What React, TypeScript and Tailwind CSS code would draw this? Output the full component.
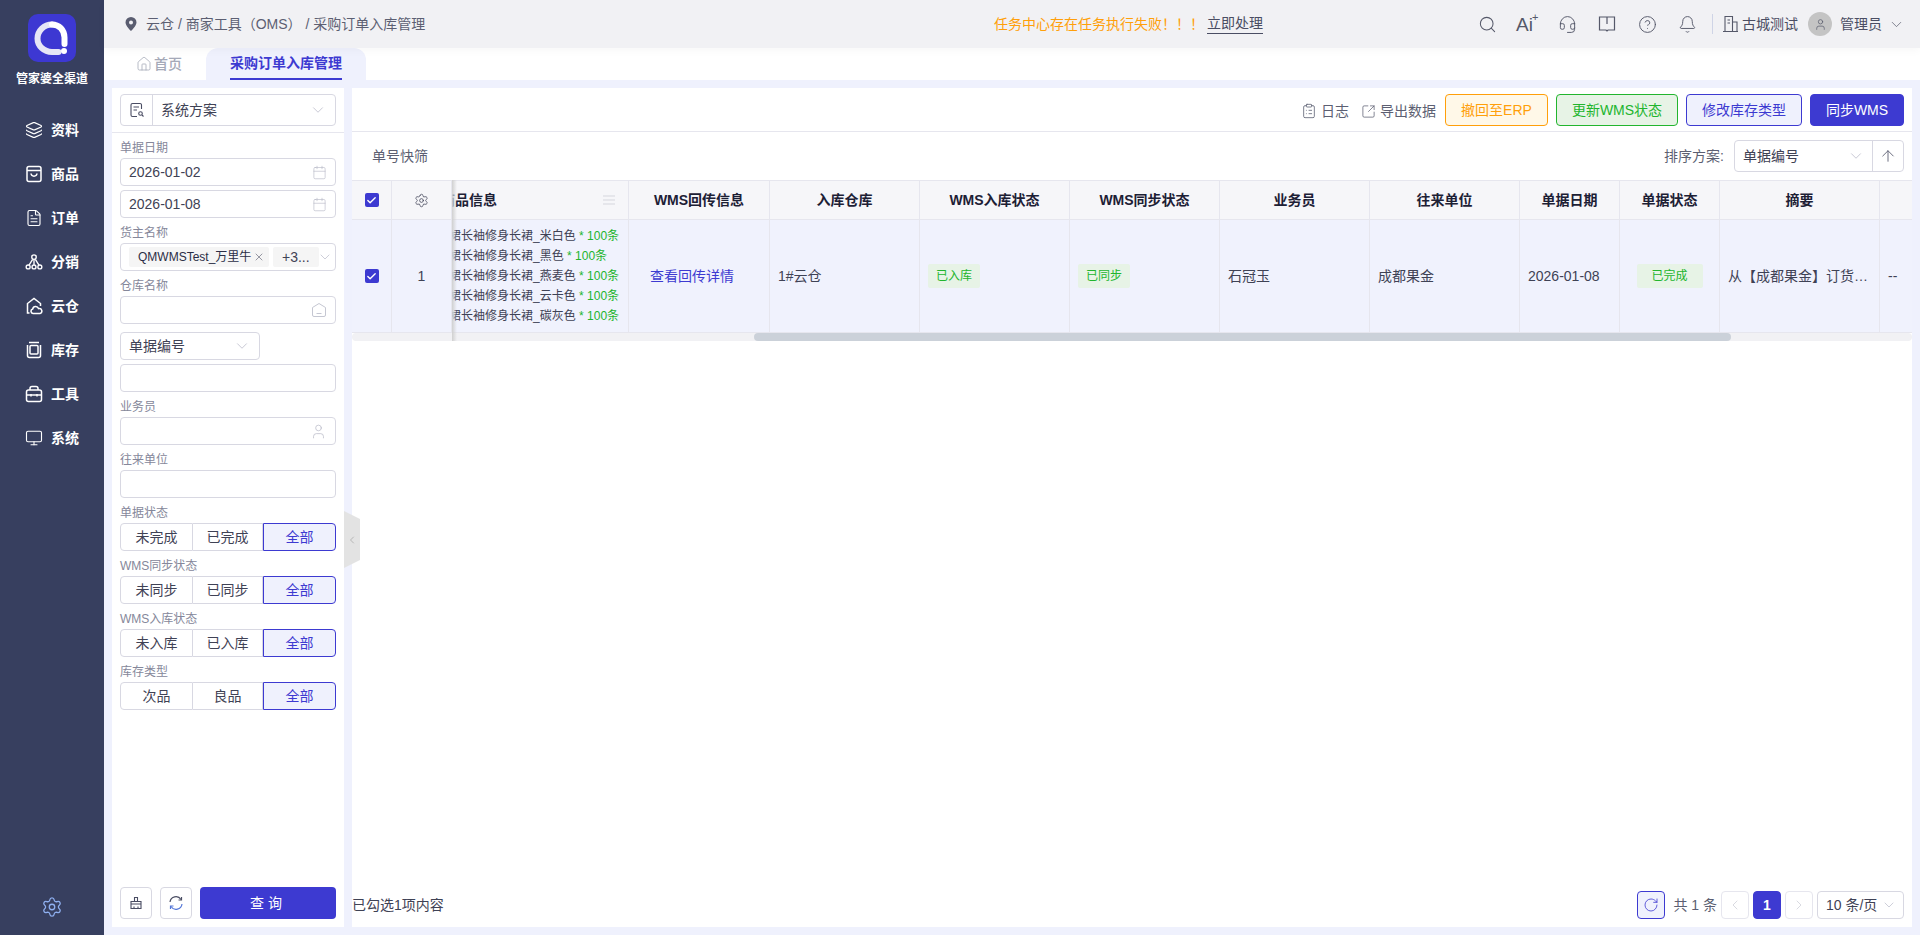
import React from "react";
import {
  Layers, FileText, Monitor, Settings, Search, Bell, CircleHelp, ChevronDown, ChevronLeft, ChevronRight,
  House, Calendar, User, ArrowUp, RotateCw, ClipboardList, SquareArrowOutUpRight, Headset, Check, X,
} from "lucide-react";

const ShopIcon = () => (
  <svg width="18" height="18" viewBox="0 0 18 18" fill="none" stroke="currentColor" strokeWidth="1.5">
    <rect x="2" y="1.5" width="14" height="15" rx="2" />
    <path d="M2 5.5h14M6 8.5c.5 3.5 5.500 3.500 6 0" />
  </svg>
);
const NetIcon = () => (
  <svg width="20" height="18" viewBox="0 0 20 18" fill="none" stroke="currentColor" strokeWidth="1.5">
    <circle cx="10" cy="3.500" r="2.500" /><circle cx="3.500" cy="14.500" r="2.200" /><circle cx="10" cy="14.500" r="2.200" /><circle cx="16.500" cy="14.500" r="2.200" />
    <path d="M10 6v6M8.500 6 4.500 12.500M11.500 6l4 6.500" />
  </svg>
);
const CloudHouseIcon = () => (
  <svg width="18" height="18" viewBox="0 0 18 18" fill="none" stroke="currentColor" strokeWidth="1.5">
    <path d="M4.500 16H2.500V6.500L9 1.500l6.500 5V9" />
    <path d="M8 16.500a2.300 2.300 0 0 1-.3-4.500 3 3 0 0 1 5.800-.4 2.500 2.500 0 0 1 1.500 4.900z" />
  </svg>
);
const StockIcon = () => (
  <svg width="18" height="18" viewBox="0 0 18 18" fill="none" stroke="currentColor" strokeWidth="1.5">
    <path d="M4 1.500h10M2.500 4v10.500a2 2 0 0 0 2 2h9a2 2 0 0 0 2-2V4" />
    <rect x="5" y="4.500" width="8" height="8.500" rx="1" />
  </svg>
);
const ToolIcon = () => (
  <svg width="18" height="18" viewBox="0 0 18 18" fill="none" stroke="currentColor" strokeWidth="1.5">
    <path d="M5 5V3.500a2 2 0 0 1 2-2h4a2 2 0 0 1 2 2V5" />
    <rect x="1.500" y="5" width="15" height="11.500" rx="2" />
    <path d="M1.500 10h15M6 9v2.500M12 9v2.500" />
  </svg>
);
const LogoIcon = () => (
  <div className="w-12 h-12 rounded-[10px] bg-[#3d38d2] flex items-center justify-center">
    <svg width="36" height="36" viewBox="0 0 36 36" fill="none">
      <path d="M18 4.500C10 4.500 3.500 11 3.500 18.500S10 32 18 32h6.500" stroke="#e6e6f6" strokeWidth="6" strokeLinecap="round" />
      <path d="M18 4.500c7 0 12.500 5.500 12.500 13V24" stroke="#ffffff" strokeWidth="6" strokeLinecap="round" />
      <circle cx="30" cy="31" r="3" fill="#ffffff" />
    </svg>
  </div>
);
const SchemeIcon = () => (
  <svg width="16" height="16" viewBox="0 0 16 16" fill="none" stroke="#4a4d63" strokeWidth="1.100">
    <path d="M8 14.500H3.500a1.500 1.500 0 0 1-1.500-1.500V3a1.500 1.500 0 0 1 1.500-1.500H11A1.500 1.500 0 0 1 12.500 3v4" />
    <path d="M4.500 5h5.500M4.500 8H8" /><circle cx="11.500" cy="11.500" r="1.800" /><path d="m13 13 1.500 1.500" />
  </svg>
);
const WarehouseIcon = () => (
  <svg width="16" height="16" viewBox="0 0 16 16" fill="none" stroke="#c5c7d2" strokeWidth="1">
    <path d="M1.500 5.500 8 1.500l6.500 4V13a1.500 1.500 0 0 1-1.500 1.500H3A1.500 1.500 0 0 1 1.500 13z" /><path d="M5.500 11.500h5" />
  </svg>
);
const BrushIcon = () => (
  <svg width="14" height="14" viewBox="0 0 14 14" fill="none" stroke="#4a4d63" strokeWidth="1.100">
    <path d="M5.500 5V1.500h3V5M2 5.500h10V8H2zM2 8v4.500h10V8M5 10.500v2M9 10.500v2" />
  </svg>
);
const CycleIcon = () => (
  <svg width="16" height="16" viewBox="0 0 16 16" fill="none" strokeWidth="1.200">
    <path d="M2 7a6 6 0 0 1 11-2.500" stroke="#4a4d63" /><path d="M14 9a6 6 0 0 1-11 2.500" stroke="#5577d8" />
    <path d="M13.500 2v3h-3" stroke="#4a4d63" /><path d="M2.500 14v-3h3" stroke="#5577d8" />
  </svg>
);
const BookIcon = () => (
  <svg width="18" height="18" viewBox="0 0 18 18" fill="none" stroke="#555869" strokeWidth="1.200">
    <path d="M1.500 2h15v13H10l-1 1-1-1H1.500zM9 2v7" />
  </svg>
);
const BuildingIcon = () => (
  <svg width="17" height="18" viewBox="0 0 17 18" fill="none" stroke="#555869" strokeWidth="1.100">
    <path d="M3 16.500V1.500h7.500v15M10.500 7H15v9.500M1 16.500h15M5.500 5h2.500M5.500 8h2.500" />
  </svg>
);
const PinIcon = () => (
  <svg width="12" height="14" viewBox="0 0 12 14">
    <path fillRule="evenodd" fill="#5a5d70" d="M6 0a5.500 5.500 0 0 1 5.500 5.500C11.500 9 6 14 6 14S.5 9 .5 5.500A5.500 5.500 0 0 1 6 0zm0 3.500a2 2 0 1 0 0 4 2 2 0 0 0 0-4z" />
  </svg>
);
const GridLines = () => (
  <svg width="12" height="10" viewBox="0 0 12 10" stroke="#d5d6dd" strokeWidth="1">
    <path d="M0 1h12M0 5h12M0 9h12" />
  </svg>
);

const Chevron = ({ size = 18 }: { size?: number }) => <ChevronDown size={size} strokeWidth={1} className="text-[#b5b7c5] shrink-0" />;

const Label = ({ children }: { children: React.ReactNode }) => (
  <div className="h-[25px] pt-[4px] flex items-center text-xs text-[#85879a]">{children}</div>
);

const Box = ({ children, className = "" }: { children?: React.ReactNode; className?: string }) => (
  <div className={`h-7 border border-[#d8d8e2] rounded-[4px] bg-white flex items-center px-2 text-sm text-[#3f4255] ${className}`}>{children}</div>
);

const Seg = ({ a, b }: { a: string; b: string }) => (
  <div className="h-7 grid grid-cols-[73px_70px_73px] text-sm text-[#3f4255]">
    <div className="border border-[#d8d8e2] rounded-l-[4px] flex items-center justify-center">{a}</div>
    <div className="border-y border-r border-[#d8d8e2] flex items-center justify-center">{b}</div>
    <div className="border border-[#3d3ad1] bg-[#eff1fd] text-[#3d3ad1] rounded-r-[4px] flex items-center justify-center">全部</div>
  </div>
);

const nav = [
  { icon: <Layers size={18} strokeWidth={1.5} />, label: "资料" },
  { icon: <ShopIcon />, label: "商品" },
  { icon: <FileText size={18} strokeWidth={1.5} />, label: "订单" },
  { icon: <NetIcon />, label: "分销" },
  { icon: <CloudHouseIcon />, label: "云仓" },
  { icon: <StockIcon />, label: "库存" },
  { icon: <ToolIcon />, label: "工具" },
  { icon: <Monitor size={18} strokeWidth={1.5} />, label: "系统" },
];

const Sidebar = () => (
  <aside className="w-[104px] shrink-0 bg-[#373f5f] flex flex-col items-center text-white">
    <div className="mt-[14px]"><LogoIcon /></div>
    <div className="mt-[9px] text-xs font-bold leading-[16px]">管家婆全渠道</div>
    <nav className="mt-[21px] flex flex-col w-full">
      {nav.map((n) => (
        <div key={n.label} className="h-11 flex items-center pl-[25px] gap-2 text-sm font-bold">
          <span className="w-[18px] flex justify-center">{n.icon}</span>
          {n.label}
        </div>
      ))}
    </nav>
    <div className="mt-auto mb-[17px] text-[#8fb0f0]"><Settings size={22} strokeWidth={1.4} /></div>
  </aside>
);

const TopBar = () => (
  <header className="relative z-10 h-12 shrink-0 bg-[#f1f1f4] shadow-[0_3px_8px_rgba(0,0,0,0.03)] flex items-center pl-[21px] pr-[15px] text-sm">
    <PinIcon />
    <span className="ml-[9px] text-[#5c5f72]">云仓 / 商家工具（OMS） / 采购订单入库管理</span>
    <div className="absolute left-[890px] flex items-center">
      <span className="text-[#ff9f0a]">任务中心存在任务执行失败！！！</span>
      <span className="ml-[3px] text-[#4a4d63] border-b border-[#4a4d63] leading-[19px]">立即处理</span>
    </div>
    <div className="ml-auto flex items-center text-[#4a4d63]">
      <Search size={19} strokeWidth={1.3} className="text-[#555869]" />
      <span className="ml-[19px] text-[#555869] text-[19px] leading-none w-[22px] relative">Ai<span className="absolute -top-[3px] left-[16px] text-[11px]">+</span></span>
      <Headset size={19} strokeWidth={1.2} className="ml-[20px] text-[#555869]" />
      <span className="ml-[21px]"><BookIcon /></span>
      <CircleHelp size={19} strokeWidth={1.2} className="ml-[22px] text-[#555869]" />
      <Bell size={19} strokeWidth={1.2} className="ml-[21px] text-[#555869]" />
      <span className="ml-[15px] w-px h-5 bg-[#cfd4e6]" />
      <span className="ml-[9px]"><BuildingIcon /></span>
      <span className="ml-[3px]">古城测试</span>
      <span className="ml-[10px] w-6 h-6 rounded-full bg-[#c4c4c4] flex items-center justify-center"><User size={13} strokeWidth={1.3} className="text-[#555869]" /></span>
      <span className="ml-2">管理员</span>
      <ChevronDown size={17} strokeWidth={1} className="ml-[6px] text-[#555869]" />
    </div>
  </header>
);

const Tabs = () => (
  <div className="h-8 shrink-0 bg-white flex items-stretch text-sm">
    <div className="w-[102px] pl-8 flex items-center gap-[2px] text-[#a5a9b8] font-medium">
      <House size={16} strokeWidth={1.2} />首页
    </div>
    <div className="w-40 bg-[#eff1fd] rounded-t-xl flex justify-center">
      <span className="h-full flex items-center border-b-2 border-[#3d3ad1] text-[#3d3ad1] font-bold">采购订单入库管理</span>
    </div>
  </div>
);

const FilterPanel = () => (
  <section className="w-[232px] shrink-0 bg-white flex flex-col">
    <div className="h-[45px] border-b border-[#e6e6ee] px-2 pt-[6px]">
      <div className="h-8 border border-[#d8d8e2] rounded-[4px] flex items-center text-sm text-[#3f4255]">
        <span className="w-8 h-full border-r border-[#d8d8e2] flex items-center justify-center shrink-0"><SchemeIcon /></span>
        <span className="ml-2 flex-1">系统方案</span>
        <span className="mr-2"><Chevron /></span>
      </div>
    </div>
    <div className="flex-1 flex flex-col px-2">
      <Label>单据日期</Label>
      <Box className="justify-between">2026-01-02<Calendar size={15} strokeWidth={1} className="text-[#b5b7c5]" /></Box>
      <Box className="justify-between mt-1">2026-01-08<Calendar size={15} strokeWidth={1} className="text-[#b5b7c5]" /></Box>
      <Label>货主名称</Label>
      <Box className="!pl-2 !pr-[8px] gap-1">
        <span className="h-5 w-[140px] shrink-0 bg-[#f5f5f5] rounded-[2px] flex items-center pl-[9px] text-xs text-[#2b2e45]">
          QMWMSTest_万里牛<X size={12} strokeWidth={1.2} className="ml-[2px] text-[#555869]" />
        </span>
        <span className="h-5 w-[46px] shrink-0 bg-[#f5f5f5] rounded-[2px] flex items-center pl-[9px] text-sm">+3...</span>
        <span className="-ml-[6px]"><Chevron size={16} /></span>
      </Box>
      <Label>仓库名称</Label>
      <Box className="justify-end"><WarehouseIcon /></Box>
      <Box className="mt-2 w-[140px] justify-between">单据编号<Chevron /></Box>
      <Box className="mt-1" />
      <Label>业务员</Label>
      <Box className="justify-end"><User size={17} strokeWidth={1} className="text-[#b5b7c5]" /></Box>
      <Label>往来单位</Label>
      <Box />
      <Label>单据状态</Label>
      <Seg a="未完成" b="已完成" />
      <Label>WMS同步状态</Label>
      <Seg a="未同步" b="已同步" />
      <Label>WMS入库状态</Label>
      <Seg a="未入库" b="已入库" />
      <Label>库存类型</Label>
      <Seg a="次品" b="良品" />
      <div className="mt-auto mb-2 flex gap-2">
        <button className="w-8 h-8 border border-[#d8d8e2] rounded-[4px] flex items-center justify-center"><BrushIcon /></button>
        <button className="w-8 h-8 border border-[#d8d8e2] rounded-[4px] flex items-center justify-center"><CycleIcon /></button>
        <button className="flex-1 h-8 rounded-[4px] bg-[#3d3ad1] text-white text-sm tracking-[4px]">查询</button>
      </div>
    </div>
  </section>
);

const Btn = ({ children, className }: { children: React.ReactNode; className: string }) => (
  <button className={`h-8 border rounded-[4px] text-sm flex items-center justify-center ${className}`}>{children}</button>
);

const Tag = ({ children, className = "" }: { children: React.ReactNode; className?: string }) => (
  <span className={`h-6 bg-[#e7f3e6] text-[#22b52e] text-xs rounded-[2px] inline-flex items-center justify-center ${className}`}>{children}</span>
);

const cols = "grid grid-cols-[40px_60px_177px_141px_150px_150px_150px_150px_150px_100px_100px_160px_32px]";
const headCell = "border-r border-[#e6e6ee] flex items-center justify-center";
const rowCell = "min-w-0 border-r border-[#e6e6ee] flex items-center text-sm text-[#3f4255]";

const CheckBox = () => (
  <span className="w-[14px] h-[14px] rounded-[2px] bg-[#3d3ad1] flex items-center justify-center">
    <Check size={11} strokeWidth={3} className="text-white" />
  </span>
);

const products = ["米白色", "黑色", "燕麦色", "云卡色", "碳灰色"];

const DataTable = () => (
  <div className="relative">
    <div className={`${cols} h-10 bg-[#f6f6f9] border-y border-[#e6e6ee] text-sm font-bold text-[#1d2035]`}>
      <div className={headCell}><CheckBox /></div>
      <div className={headCell}><Settings size={15} strokeWidth={1.2} className="text-[#3f4255]" /></div>
      <div className={`${headCell} !justify-between overflow-hidden pr-[13px]`}><span className="-ml-[11px]">商品信息</span><GridLines /></div>
      <div className={headCell}>WMS回传信息</div>
      <div className={headCell}>入库仓库</div>
      <div className={headCell}>WMS入库状态</div>
      <div className={headCell}>WMS同步状态</div>
      <div className={headCell}>业务员</div>
      <div className={headCell}>往来单位</div>
      <div className={headCell}>单据日期</div>
      <div className={headCell}>单据状态</div>
      <div className={headCell}>摘要</div>
      <div />
    </div>
    <div className={`${cols} h-[113px] bg-[#f0f2fd] border-b border-[#e6e6ee]`}>
      <div className={`${rowCell} justify-center`}><CheckBox /></div>
      <div className={`${rowCell} justify-center`}>1</div>
      <div className={`${rowCell} overflow-hidden`}>
        <div className="-ml-[3px] text-xs leading-5 whitespace-nowrap">
          {products.map((p) => (
            <div key={p}>裙长袖修身长裙_{p} <span className="text-[#22b52e]">* 100条</span></div>
          ))}
        </div>
      </div>
      <div className={`${rowCell} pl-[21px] !text-[#3d3ad1]`}>查看回传详情</div>
      <div className={`${rowCell} pl-2`}>1#云仓</div>
      <div className={`${rowCell} pl-2`}><Tag className="w-[52px]">已入库</Tag></div>
      <div className={`${rowCell} pl-2`}><Tag className="w-[52px]">已同步</Tag></div>
      <div className={`${rowCell} pl-2`}>石冠玉</div>
      <div className={`${rowCell} pl-2`}>成都果金</div>
      <div className={`${rowCell} pl-2`}>2026-01-08</div>
      <div className={`${rowCell} justify-center`}><Tag className="w-[66px]">已完成</Tag></div>
      <div className={`${rowCell} pl-2 pr-2`}><span className="truncate">从【成都果金】订货单生成</span></div>
      <div className={`${rowCell} pl-2 border-r-0`}>--</div>
    </div>
    <div className="h-2 bg-[#f1f1f4] rounded-full pl-[402px]">
      <div className="h-2 w-[977px] rounded-full bg-[#cbd1d9]" />
    </div>
    <div className="absolute left-[100px] top-0 bottom-0 w-[5px] bg-gradient-to-r from-[#d0d0d0] to-transparent" />
  </div>
);

const PageBtn = ({ children, className = "" }: { children: React.ReactNode; className?: string }) => (
  <span className={`w-7 h-7 rounded-[4px] flex items-center justify-center border ${className}`}>{children}</span>
);

const MainPanel = () => (
  <section className="flex-1 min-w-0 bg-white flex flex-col">
    <div className="h-11 shrink-0 border-b border-[#e6e6ee] flex items-start pt-[6px] pr-2 justify-end text-sm text-[#5c5f72]">
      <span className="mt-[7px] flex items-center gap-1"><ClipboardList size={16} strokeWidth={1.2} />日志</span>
      <span className="mt-[7px] ml-[12px] flex items-center gap-[4px]"><SquareArrowOutUpRight size={15} strokeWidth={1.2} />导出数据</span>
      <div className="ml-[9px] flex gap-2">
        <Btn className="w-[103px] border-[#ff9f0a] bg-[#fff8e8] text-[#ff9f0a]">撤回至ERP</Btn>
        <Btn className="w-[122px] border-[#22b52e] bg-[#e7f3e6] text-[#22b52e]">更新WMS状态</Btn>
        <Btn className="w-[116px] border-[#3d3ad1] bg-[#eff1fd] text-[#3d3ad1]">修改库存类型</Btn>
        <Btn className="w-[94px] border-[#3d3ad1] bg-[#3d3ad1] text-white">同步WMS</Btn>
      </div>
    </div>
    <div className="h-12 shrink-0 flex items-center pl-5 pr-2 text-sm text-[#5c5f72]">
      <span>单号快筛</span>
      <span className="ml-auto">排序方案:</span>
      <div className="ml-[10px] w-[170px] h-8 border border-[#d8d8e2] rounded-[4px] flex items-center text-[#3f4255]">
        <span className="ml-2 flex-1">单据编号</span>
        <span className="mr-[7px]"><Chevron /></span>
        <span className="w-[31px] h-full border-l border-[#d8d8e2] flex items-center justify-center"><ArrowUp size={18} strokeWidth={1.2} className="text-[#5c5f72]" /></span>
      </div>
    </div>
    <DataTable />
    <div className="mt-auto mb-2 h-7 flex items-center pr-2 text-sm text-[#3f4255]">
      <span>已勾选1项内容</span>
      <div className="ml-auto flex items-center gap-1">
        <PageBtn className="border-[#3d3ad1] bg-[#eff1fd] text-[#3d3ad1]"><RotateCw size={16} strokeWidth={1.2} /></PageBtn>
        <span className="ml-1 mr-0 text-[#5c5f72]">共 1 条</span>
        <PageBtn className="border-[#e6e6ee] text-[#c5c7d2]"><ChevronLeft size={16} strokeWidth={1} /></PageBtn>
        <PageBtn className="border-[#3d3ad1] bg-[#3d3ad1] text-white font-bold">1</PageBtn>
        <PageBtn className="border-[#e6e6ee] text-[#c5c7d2]"><ChevronRight size={16} strokeWidth={1} /></PageBtn>
        <span className="w-[87px] h-7 border border-[#d8d8e2] rounded-[4px] flex items-center justify-between pl-2 pr-[6px]">10 条/页<Chevron size={16} /></span>
      </div>
    </div>
  </section>
);

export default function App() {
  return (
    <div className="w-screen h-screen overflow-hidden flex bg-white font-['Liberation_Sans','Noto_Sans_CJK_SC',sans-serif]">
      <Sidebar />
      <div className="flex-1 min-w-0 flex flex-col">
        <TopBar />
        <Tabs />
        <main className="relative flex-1 min-h-0 bg-[#eff1fd] p-2 flex gap-2">
          <FilterPanel />
          <MainPanel />
          <div className="absolute left-[240px] top-[431px] w-4 h-[57px] bg-[#e3e3e3] [clip-path:polygon(0_0,100%_14%,100%_86%,0_100%)] flex items-center justify-center">
            <ChevronLeft size={12} strokeWidth={1} className="text-[#888888]" />
          </div>
        </main>
      </div>
    </div>
  );
}
